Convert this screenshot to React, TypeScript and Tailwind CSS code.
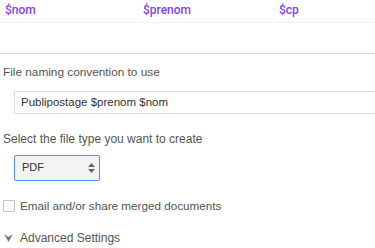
import React, { useState } from 'react';

const columns = [
  { name: '$nom', width: 'w-[136px] mr-[2px]' },
  { name: '$prenom', width: 'w-[134px] mr-[2px]' },
  { name: '$cp', width: 'flex-1' },
];

const App: React.FC = () => {
  const [fileName, setFileName] = useState('Publipostage $prenom $nom');
  const [fileType, setFileType] = useState('PDF');
  const [share, setShare] = useState(false);

  return (
    <div className="w-[375px] h-[248px] overflow-hidden bg-white font-['Liberation_Sans',Arial,sans-serif] text-[#555]">
      {/* merge fields table */}
      <div className="flex">
        {columns.map((c) => (
          <div
            key={c.name}
            className={`h-[23px] flex items-center px-[5px] pb-[3px] border-b border-[#f0f0f0] text-[12px] font-['Roboto',sans-serif] font-medium text-[#8142ff] ${c.width}`}
          >
            {c.name}
          </div>
        ))}
      </div>
      <div className="h-[31px] border-b border-[#dcdcdc]" />

      <div className="pl-[3px] pt-[11px] text-[11.8px] leading-[15px]">File naming convention to use</div>
      <div className="pl-[14px] pt-[9px]">
        <input
          value={fileName}
          onChange={(e) => setFileName(e.target.value)}
          className="w-[400px] h-[23px] border border-[#dcdcdc] px-[6px] text-[11.5px] text-[#333] outline-none"
        />
      </div>

      <div className="pl-[3px] pt-[18px] text-[12px] leading-[15px]">Select the file type you want to create</div>
      <div className="pl-[14px] pt-[8px]">
        <div className="relative w-[86px] h-[26px] rounded-[2px] border border-[#4d90fe] bg-[#f3f3f3] flex items-center">
          <select
            value={fileType}
            onChange={(e) => setFileType(e.target.value)}
            className="appearance-none w-full h-full bg-transparent pl-[7px] text-[11px] text-[#333] outline-none"
          >
            <option>PDF</option>
            <option>Google Docs</option>
          </select>
          <svg className="absolute right-[4px] top-[7px] pointer-events-none" width="7" height="10" viewBox="0 0 7 10">
            <path d="M0 4 L3.5 0 L7 4 Z" fill="#666" />
            <path d="M0 6 L3.5 10 L7 6 Z" fill="#666" />
          </svg>
        </div>
      </div>

      <label className="flex items-center h-[14px] mt-[18px] pl-[3px] text-[11.7px] cursor-pointer">
        <input
          type="checkbox"
          checked={share}
          onChange={(e) => setShare(e.target.checked)}
          className="appearance-none w-[12px] h-[12px] border border-[#c4c4c4] rounded-[1px] bg-white mr-[5px]"
        />
        Email and/or share merged documents
      </label>

      <div className="flex items-center h-[15px] mt-[18px] pl-[4px] text-[12px]">
        <svg width="9" height="8" viewBox="0 0 9 8" className="mr-[7px]">
          <path d="M0 0 L4.5 3 L9 0 L4.5 8 Z" fill="#777" />
        </svg>
        Advanced Settings
      </div>
    </div>
  );
};

export default App;
